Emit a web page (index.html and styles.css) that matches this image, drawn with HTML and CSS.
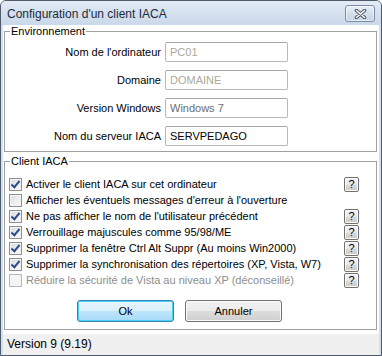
FILE: index.html
```html
<!DOCTYPE html>
<html lang="fr">
<head>
<meta charset="utf-8">
<title>Configuration d'un client IACA</title>
<link rel="stylesheet" href="styles.css">
</head>
<body>
<div class="window">
  <div class="titlebar">
    <span class="title">Configuration d'un client IACA</span>
    <button class="close" aria-label="Fermer">
      <svg width="13" height="10" viewBox="0 0 13 10"><path d="M2.5 1.5 L10.5 8.5 M10.5 1.5 L2.5 8.5" stroke="#4d5566" stroke-width="3.6" stroke-linecap="round" fill="none"/><path d="M2.5 1.5 L10.5 8.5 M10.5 1.5 L2.5 8.5" stroke="#ffffff" stroke-width="1.6" stroke-linecap="round" fill="none"/></svg>
    </button>
  </div>
  <div class="client">
    <fieldset class="group env">
      <legend>Environnement</legend>
      <div class="form">
        <label class="lbl">Nom de l'ordinateur</label>
        <input class="field disabled" value="PC01" readonly>
        <label class="lbl">Domaine</label>
        <input class="field disabled" value="DOMAINE" readonly>
        <label class="lbl">Version Windows</label>
        <input class="field grey" value="Windows 7" readonly>
        <label class="lbl">Nom du serveur IACA</label>
        <input class="field" value="SERVPEDAGO">
      </div>
    </fieldset>
    <fieldset class="group cli">
      <legend>Client IACA</legend>
      <div class="checks">
        <div class="row"><span class="cb checked"></span><span class="text">Activer le client IACA sur cet ordinateur</span><span class="help">?</span></div>
        <div class="row"><span class="cb"></span><span class="text">Afficher les éventuels messages d'erreur à l'ouverture</span></div>
        <div class="row"><span class="cb checked"></span><span class="text">Ne pas afficher le nom de l'utilisateur précédent</span><span class="help">?</span></div>
        <div class="row"><span class="cb checked"></span><span class="text">Verrouillage majuscules comme 95/98/ME</span><span class="help">?</span></div>
        <div class="row"><span class="cb checked"></span><span class="text">Supprimer la fenêtre Ctrl Alt Suppr (Au moins Win2000)</span><span class="help">?</span></div>
        <div class="row"><span class="cb checked"></span><span class="text">Supprimer la synchronisation des répertoires (XP, Vista, W7)</span><span class="help">?</span></div>
        <div class="row off"><span class="cb"></span><span class="text">Réduire la sécurité de Vista au niveau XP (déconseillé)</span><span class="help">?</span></div>
      </div>
      <div class="actions">
        <button class="btn default">Ok</button>
        <button class="btn">Annuler</button>
      </div>
    </fieldset>
    <div class="status">Version 9 (9.19)</div>
  </div>
</div>
</body>
</html>
```
FILE: styles.css
```css
html, body {
  margin: 0;
  padding: 0;
  background: #ffffff;
}

.window {
  width: 382px;
  height: 356px;
  box-sizing: border-box;
  border: 1px solid #4f5b6b;
  border-radius: 6px 6px 0 0;
  background: #d3e0ef;
  display: flex;
  flex-direction: column;
  overflow: hidden;
}

.titlebar {
  height: 24px;
  flex: none;
  display: flex;
  align-items: center;
  padding: 0 6px 0 6px;
  background: linear-gradient(#e3ebf5, #d5e1ef 50%, #c9d8ea);
}

.title {
  font-family: "Liberation Sans", Arial, sans-serif;
  font-size: 12px;
  color: #1b2a3d;
  flex: 1;
  padding-top: 1px;
}

.close {
  width: 30px;
  height: 17px;
  margin: 1px 0 0 0;
  padding: 0;
  border: 1px solid #7d8ca4;
  border-radius: 3px;
  background: linear-gradient(#e9eff7, #d5e0ee 50%, #c6d4e6);
  box-shadow: inset 0 0 0 1px rgba(255,255,255,0.6);
  display: flex;
  align-items: center;
  justify-content: center;
}

.client {
  flex: 1;
  margin: 0 2px;
  background: #ffffff;
  display: flex;
  flex-direction: column;
  font-family: "Liberation Sans", Arial, sans-serif;
  font-size: 11px;
  color: #000;
}

.group {
  margin: 0 2px 0 1px;
  padding: 0;
  border: 1px solid #a0a0a0;
  min-width: 0;
}

.group legend {
  margin-left: 5px;
  padding: 0 1px;
  line-height: 13px;
  font-size: 11px;
}

.env .form {
  display: grid;
  grid-template-columns: 156px 123px;
  column-gap: 4px;
  row-gap: 8px;
  padding: 4px 0 5px 0;
}

.lbl {
  text-align: right;
  line-height: 20px;
  white-space: nowrap;
}

.field {
  box-sizing: border-box;
  width: 123px;
  height: 20px;
  margin: 0;
  padding: 0 4px;
  border: 1px solid #b5b8c0;
  border-top-color: #a4a7ae;
  border-radius: 2px;
  background: #ffffff;
  font-family: "Liberation Sans", Arial, sans-serif;
  font-size: 11px;
  color: #000;
  outline: none;
}

.field.disabled {
  color: #aca899;
}

.field.grey {
  color: #6d6d6d;
}

.cli {
  margin-top: 3px;
}

.checks {
  padding: 8px 17px 0 4px;
}

.row {
  height: 16px;
  display: flex;
  align-items: center;
}

.cb {
  width: 13px;
  height: 13px;
  box-sizing: border-box;
  flex: none;
  border: 1px solid #8e8f8f;
  background: linear-gradient(135deg, #dcdcdc, #fbfbfb);
  box-shadow: inset 0 0 0 1px #f4f4f4;
  position: relative;
}

.cb.checked::after {
  content: "";
  position: absolute;
  left: 3px;
  top: 0px;
  width: 3px;
  height: 7px;
  border: solid #2f4b8a;
  border-width: 0 2px 2px 0;
  transform: rotate(40deg);
}

.text {
  flex: 1;
  margin-left: 4px;
  white-space: nowrap;
}

.help {
  width: 15px;
  height: 15px;
  box-sizing: border-box;
  flex: none;
  border: 1px solid #707070;
  border-radius: 2px;
  background: linear-gradient(#f4f4f4, #e8e8e8 50%, #d9d9d9 51%, #cdcdcd);
  box-shadow: inset 0 0 0 1px #fcfcfc;
  text-align: center;
  line-height: 13px;
  font-size: 11px;
}

.row.off .text {
  color: #8d8d8d;
}

.row.off .cb {
  border-color: #b9b9b9;
  background: #f4f4f4;
}

.actions {
  display: flex;
  gap: 11px;
  padding: 12px 0 7px 72px;
}

.btn {
  width: 97px;
  height: 22px;
  margin: 0;
  padding: 0;
  border: 1px solid #707070;
  border-radius: 3px;
  background: linear-gradient(#f2f2f2, #ebebeb 49%, #dddddd 50%, #cfcfcf);
  box-shadow: inset 0 0 0 1px #fbfbfb;
  font-family: "Liberation Sans", Arial, sans-serif;
  font-size: 11px;
  color: #000;
}

.btn.default {
  border-color: #3c7fb1;
  background: linear-gradient(#eaf6fd, #d9f0fc 49%, #bee6fd 50%, #a7d9f5);
  box-shadow: inset 0 0 0 1px #48d0f5;
}

.status {
  margin-top: auto;
  height: 21px;
  line-height: 21px;
  padding-left: 4px;
  background: #f0f0f0;
  font-family: "Liberation Sans", Arial, sans-serif;
  font-size: 12px;
  color: #000;
}
```
